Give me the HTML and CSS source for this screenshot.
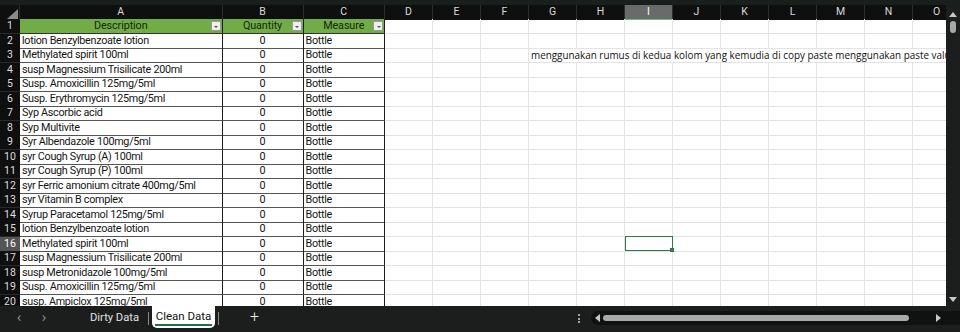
FILE: index.html
```html
<!DOCTYPE html>
<html>
<head>
<meta charset="utf-8">
<link rel="stylesheet" href="styles.css">
</head>
<body>
<div class="app">
  <div class="topstrip"></div>
  <div class="main">
    <div class="sheet">
      <div class="row hdr">
        <div class="corner"><span class="tri"></span></div>
        <div class="ch">A</div><div class="ch">B</div><div class="ch">C</div>
        <div class="ch">D</div><div class="ch">E</div><div class="ch">F</div><div class="ch">G</div><div class="ch">H</div>
        <div class="ch sel">I</div><div class="ch">J</div><div class="ch">K</div><div class="ch">L</div><div class="ch">M</div><div class="ch">N</div><div class="ch">O</div>
      </div>
      <div class="row"><div class="rh">1</div><div class="c th">Description<span class="fb"></span></div><div class="c th">Quantity<span class="fb"></span></div><div class="c th">Measure<span class="fb"></span></div><i></i><i></i><i></i><i></i><i></i><i></i><i></i><i></i><i></i><i></i><i></i><i></i></div>
      <div class="row"><div class="rh">2</div><div class="c d">lotion Benzylbenzoate lotion</div><div class="c q">0</div><div class="c m">Bottle</div><i></i><i></i><i></i><i></i><i></i><i></i><i></i><i></i><i></i><i></i><i></i><i></i></div>
      <div class="row"><div class="rh">3</div><div class="c d">Methylated spirit 100ml</div><div class="c q">0</div><div class="c m">Bottle</div><i></i><i></i><i></i><div class="note">menggunakan rumus di kedua kolom yang kemudia di copy paste menggunakan paste value</div></div>
      <div class="row"><div class="rh">4</div><div class="c d">susp Magnessium Trisilicate 200ml</div><div class="c q">0</div><div class="c m">Bottle</div><i></i><i></i><i></i><i></i><i></i><i></i><i></i><i></i><i></i><i></i><i></i><i></i></div>
      <div class="row"><div class="rh">5</div><div class="c d">Susp. Amoxicillin 125mg/5ml</div><div class="c q">0</div><div class="c m">Bottle</div><i></i><i></i><i></i><i></i><i></i><i></i><i></i><i></i><i></i><i></i><i></i><i></i></div>
      <div class="row"><div class="rh">6</div><div class="c d">Susp. Erythromycin 125mg/5ml</div><div class="c q">0</div><div class="c m">Bottle</div><i></i><i></i><i></i><i></i><i></i><i></i><i></i><i></i><i></i><i></i><i></i><i></i></div>
      <div class="row"><div class="rh">7</div><div class="c d">Syp Ascorbic acid</div><div class="c q">0</div><div class="c m">Bottle</div><i></i><i></i><i></i><i></i><i></i><i></i><i></i><i></i><i></i><i></i><i></i><i></i></div>
      <div class="row"><div class="rh">8</div><div class="c d">Syp Multivite</div><div class="c q">0</div><div class="c m">Bottle</div><i></i><i></i><i></i><i></i><i></i><i></i><i></i><i></i><i></i><i></i><i></i><i></i></div>
      <div class="row"><div class="rh">9</div><div class="c d">Syr Albendazole 100mg/5ml</div><div class="c q">0</div><div class="c m">Bottle</div><i></i><i></i><i></i><i></i><i></i><i></i><i></i><i></i><i></i><i></i><i></i><i></i></div>
      <div class="row"><div class="rh">10</div><div class="c d">syr Cough Syrup (A) 100ml</div><div class="c q">0</div><div class="c m">Bottle</div><i></i><i></i><i></i><i></i><i></i><i></i><i></i><i></i><i></i><i></i><i></i><i></i></div>
      <div class="row"><div class="rh">11</div><div class="c d">syr Cough Syrup (P) 100ml</div><div class="c q">0</div><div class="c m">Bottle</div><i></i><i></i><i></i><i></i><i></i><i></i><i></i><i></i><i></i><i></i><i></i><i></i></div>
      <div class="row"><div class="rh">12</div><div class="c d">syr Ferric amonium citrate 400mg/5ml</div><div class="c q">0</div><div class="c m">Bottle</div><i></i><i></i><i></i><i></i><i></i><i></i><i></i><i></i><i></i><i></i><i></i><i></i></div>
      <div class="row"><div class="rh">13</div><div class="c d">syr Vitamin B complex</div><div class="c q">0</div><div class="c m">Bottle</div><i></i><i></i><i></i><i></i><i></i><i></i><i></i><i></i><i></i><i></i><i></i><i></i></div>
      <div class="row"><div class="rh">14</div><div class="c d">Syrup Paracetamol 125mg/5ml</div><div class="c q">0</div><div class="c m">Bottle</div><i></i><i></i><i></i><i></i><i></i><i></i><i></i><i></i><i></i><i></i><i></i><i></i></div>
      <div class="row"><div class="rh">15</div><div class="c d">lotion Benzylbenzoate lotion</div><div class="c q">0</div><div class="c m">Bottle</div><i></i><i></i><i></i><i></i><i></i><i></i><i></i><i></i><i></i><i></i><i></i><i></i></div>
      <div class="row"><div class="rh sel">16</div><div class="c d">Methylated spirit 100ml</div><div class="c q">0</div><div class="c m">Bottle</div><i></i><i></i><i></i><i></i><i></i><i class="active"></i><i></i><i></i><i></i><i></i><i></i><i></i></div>
      <div class="row"><div class="rh">17</div><div class="c d">susp Magnessium Trisilicate 200ml</div><div class="c q">0</div><div class="c m">Bottle</div><i></i><i></i><i></i><i></i><i></i><i></i><i></i><i></i><i></i><i></i><i></i><i></i></div>
      <div class="row"><div class="rh">18</div><div class="c d">susp Metronidazole 100mg/5ml</div><div class="c q">0</div><div class="c m">Bottle</div><i></i><i></i><i></i><i></i><i></i><i></i><i></i><i></i><i></i><i></i><i></i><i></i></div>
      <div class="row"><div class="rh">19</div><div class="c d">Susp. Amoxicillin 125mg/5ml</div><div class="c q">0</div><div class="c m">Bottle</div><i></i><i></i><i></i><i></i><i></i><i></i><i></i><i></i><i></i><i></i><i></i><i></i></div>
      <div class="row"><div class="rh">20</div><div class="c d">susp. Ampiclox 125mg/5ml</div><div class="c q">0</div><div class="c m">Bottle</div><i></i><i></i><i></i><i></i><i></i><i></i><i></i><i></i><i></i><i></i><i></i><i></i></div>
    </div>
    <div class="vscroll">
      <span class="arr up"></span>
      <span class="vthumb"></span>
      <span class="grow"></span>
      <span class="arr down"></span>
    </div>
  </div>
  <div class="tabbar">
    <span class="nav">&lsaquo;</span>
    <span class="nav">&rsaquo;</span>
    <span class="tab">Dirty Data</span>
    <span class="sep"></span>
    <span class="tab active"><span class="tl">Clean Data</span></span>
    <span class="sep"></span>
    <span class="plus">+</span>
    <span class="grow"></span>
    <span class="dots"><b></b><b></b><b></b></span>
    <div class="hscroll">
      <span class="harr left"></span>
      <span class="hthumb"></span>
      <span class="grow"></span>
      <span class="harr right"></span>
    </div>
  </div>
</div>
</body>
</html>
```

FILE: styles.css
```css
* { box-sizing: border-box; margin: 0; padding: 0; }
html, body { width: 960px; height: 332px; overflow: hidden; background: #1b1e1d; }
body { font-family: "Roboto", "Noto Sans", sans-serif; }

.app { width: 960px; height: 332px; display: flex; flex-direction: column; background: #1b1e1d; }
.topstrip { height: 5px; background: #1a1f1c; flex: none; }
.main { display: flex; height: 301px; flex: none; }

.sheet { width: 946px; overflow: hidden; background: #fff; position: relative; flex: none; }
.row {
  display: grid;
  grid-template-columns: 20px 202.5px 81px 81.5px repeat(12, 48px);
  height: 14.5px;
}
.row.hdr { height: 14px; background: #0f0f0f; }

.corner { background: #0f0f0f; position: relative; border-right: 1px solid #2a2a2a; }
.tri {
  position: absolute; right: 1px; bottom: 1px; width: 0; height: 0;
  border-left: 11px solid transparent; border-bottom: 10px solid #8a8a8a;
}
.ch {
  color: #d8d8d8; font-size: 10.5px; line-height: 14px; text-align: center;
  border-right: 1px solid #2c2c2c; background: #0f0f0f;
}
.ch.sel { background: #6a6a6a; color: #fff; border-bottom: 1px solid #6fb88b; }

.rh {
  background: #0f0f0f; color: #dedede; font-size: 10.5px; line-height: 14px;
  text-align: center; border-bottom: 1px solid #2a2a2a;
}
.rh.sel { background: #555; color: #fff; }

.row i {
  display: block; border-right: 1px solid #e3e3e3; border-bottom: 1px solid #e3e3e3;
}
.row i.active { position: relative; }
.row i.active::after {
  content: ""; position: absolute; left: 0; top: -1px; right: -1px; bottom: 0;
  border: 1.5px solid #2f7a4e;
}
.row i.active::before {
  content: ""; position: absolute; right: -2px; bottom: -1px; width: 4px; height: 4px;
  background: #2f7a4e; z-index: 2;
}

.c {
  font-size: 10.8px; line-height: 13.5px; color: #141414; white-space: nowrap; overflow: hidden;
  border-right: 1px solid #1e1e1e; border-bottom: 1px solid #555; letter-spacing: -0.3px;
}
.c.d { padding-left: 2px; }
.c.q { text-align: center; }
.c.m { padding-left: 2px; }
.c.th {
  background: #70ad47; text-align: center; position: relative; color: #18240f;
  border-bottom: 1px solid #333; letter-spacing: -0.1px;
}
.fb {
  position: absolute; right: 1px; top: 2px; width: 10px; height: 10px;
  background: #efefef; border: 1px solid #9a9a9a;
}
.fb::after {
  content: ""; position: absolute; left: 2.5px; top: 3.5px; width: 0; height: 0;
  border-left: 2px solid transparent; border-right: 2px solid transparent; border-top: 2px solid #555;
}

.note {
  grid-column: span 9; font-family: "Open Sans", sans-serif; font-size: 9.9px; line-height: 14px;
  color: #111; white-space: nowrap; overflow: hidden; padding-left: 2px;
  border-bottom: 1px solid #e3e3e3;
}

.vscroll {
  width: 14px; flex: none; background: #1b1e1d; display: flex; flex-direction: column;
  align-items: center; padding: 7px 0 4px;
}
.arr { width: 0; height: 0; border-left: 4px solid transparent; border-right: 4px solid transparent; }
.arr.up { border-bottom: 5px solid #c8c8c8; }
.arr.down { border-top: 5px solid #c8c8c8; }
.vthumb { width: 6px; height: 12px; border-radius: 3px; background: #a8a8a8; margin-top: 4px; }
.grow { flex: 1; }

.tabbar {
  flex: 1; display: flex; align-items: flex-start; background: #1b1e1d; color: #ddd;
  font-family: "Roboto", "Noto Sans", sans-serif;
}
.nav { color: #8c8c8c; font-size: 15px; line-height: 22px; width: 12px; text-align: center; }
.nav:first-child { margin-left: 13px; }
.nav + .nav { margin-left: 13px; }
.tab { font-size: 11.2px; line-height: 22px; color: #e0e0e0; margin-left: 40px; padding: 1px 0 0; }
.sep { width: 1px; height: 13px; background: #8a8a8a; margin: 6px 0 0 9px; }
.tab.active {
  background: #fff; color: #111; margin-left: 3px; width: 63px; height: 22px;
  border-radius: 0 0 5px 5px; text-align: center; padding: 0;
  font-size: 11.5px; line-height: 20px;
}
.tab.active .tl { display: inline-block; border-bottom: 2px solid #1e7145; line-height: 15px; padding: 0 1px; margin-top: 3px; }
.tab.active + .sep { margin-left: 3px; }
.plus { font-size: 16px; line-height: 22px; color: #e8e8e8; margin-left: 31px; font-weight: 300; }
.dots { display: flex; flex-direction: column; gap: 1.5px; margin: 8px 11px 0 0; }
.dots b { width: 2px; height: 2px; background: #d0d0d0; border-radius: 1px; display: block; }
.hscroll {
  width: 369px; flex: none; height: 14px; background: #101211; border-radius: 7px 0 0 7px; margin-top: 5px;
  display: flex; align-items: center; padding-left: 4px; padding-right: 19px;
}
.harr { width: 0; height: 0; border-top: 4px solid transparent; border-bottom: 4px solid transparent; }
.harr.left { border-right: 5px solid #c8c8c8; }
.harr.right { border-left: 5px solid #c8c8c8; }
.hthumb { width: 306px; height: 6px; background: #a9a9a9; border-radius: 3px; margin-left: 3px; }
```
